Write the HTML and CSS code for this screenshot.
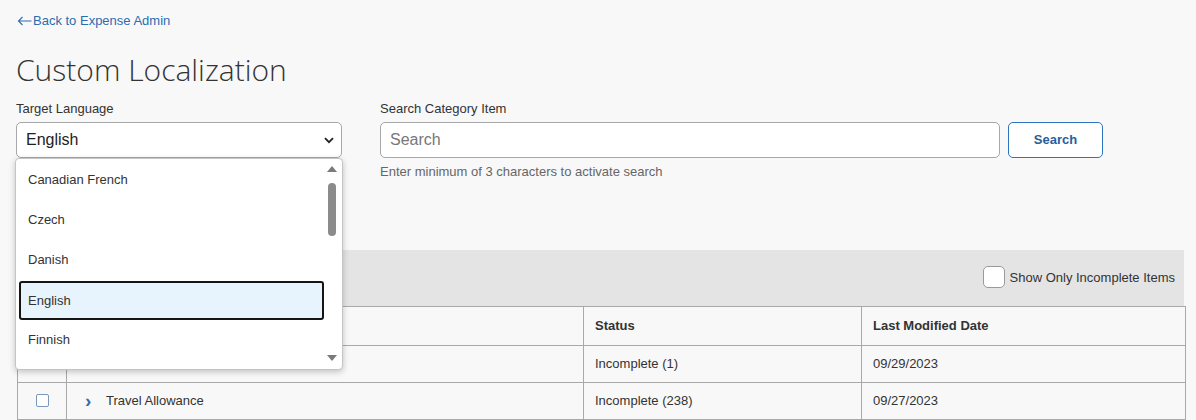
FILE: index.html
```html
<!DOCTYPE html>
<html lang="en">
<head>
<meta charset="utf-8">
<title>Custom Localization</title>
<link rel="stylesheet" href="styles.css">
</head>
<body>
<div class="page">
  <a class="back" href="#"><svg class="back-arrow" width="15" height="10" viewBox="0 0 15 10"><path d="M14.5 5H1.5M5.5 1L1.5 5l4 4" fill="none" stroke="currentColor" stroke-width="1.1"/></svg>Back to Expense Admin</a>
  <h1 class="title">Custom Localization</h1>

  <div class="form-row">
    <div class="field lang-field">
      <div class="label">Target Language</div>
      <div class="select">
        <span>English</span>
        <svg class="chev" width="10" height="7" viewBox="0 0 10 7"><path d="M1 1.2l4 4 4-4" fill="none" stroke="#222" stroke-width="1.8"/></svg>
      </div>
      <div class="dropdown">
        <ul class="options">
          <li class="opt">Canadian French</li>
          <li class="opt">Czech</li>
          <li class="opt">Danish</li>
          <li class="opt selected">English</li>
          <li class="opt">Finnish</li>
        </ul>
        <div class="scroll">
          <span class="tri up"></span>
          <span class="thumb"></span>
          <span class="track"></span>
          <span class="tri down"></span>
        </div>
      </div>
    </div>
    <div class="field search-field">
      <div class="label">Search Category Item</div>
      <div class="search-row">
        <div class="input">Search</div>
        <button class="btn">Search</button>
      </div>
      <div class="help">Enter minimum of 3 characters to activate search</div>
    </div>
  </div>

  <div class="band">
    <label class="only"><span class="cb-big"></span>Show Only Incomplete Items</label>
  </div>
  <table class="grid">
    <colgroup>
      <col class="c1"><col class="c2"><col class="c3"><col class="c4">
    </colgroup>
    <thead>
      <tr><th></th><th></th><th>Status</th><th>Last Modified Date</th></tr>
    </thead>
    <tbody>
      <tr>
        <td class="cbcell"><span class="cb"></span></td>
        <td><span class="exp">›</span>Car Rental</td>
        <td>Incomplete (1)</td>
        <td>09/29/2023</td>
      </tr>
      <tr>
        <td class="cbcell"><span class="cb"></span></td>
        <td><span class="exp">›</span>Travel Allowance</td>
        <td>Incomplete (238)</td>
        <td>09/27/2023</td>
      </tr>
    </tbody>
  </table>
</div>
</body>
</html>
```

FILE: styles.css
```css
* { box-sizing: border-box; }
html, body { margin: 0; padding: 0; }
body {
  background: #f8f8f8;
  font-family: "Liberation Sans", Arial, sans-serif;
  font-size: 13px;
  color: #333;
  height: 420px;
  overflow: hidden;
}
.page { padding: 13px 12px 0 16px; }

.back {
  display: inline-flex;
  align-items: center;
  height: 16px;
  line-height: 16px;
  color: #2d6cb0;
  text-decoration: none;
  font-size: 13px;
  margin-left: 1px;
}
.back-arrow { margin-right: 1px; }

.title {
  font-family: "Open Sans", sans-serif;
  font-weight: 300;
  font-size: 30px;
  line-height: 40px;
  margin: 21px 0 0 0;
  color: #333;
}

.form-row { display: flex; gap: 38px; margin-top: 11px; }
.field { display: flex; flex-direction: column; }
.lang-field { width: 326px; position: relative; }
.label { line-height: 16px; height: 16px; margin-bottom: 5px; }

.select {
  height: 36px;
  background: #fff;
  border: 1px solid #a8a8a8;
  border-radius: 5px;
  display: flex;
  align-items: center;
  justify-content: space-between;
  padding: 0 7px 0 9px;
  font-size: 16px;
  color: #222;
}
.chev { display: block; }

.dropdown {
  position: absolute;
  left: -1px;
  top: 57px;
  width: 328px;
  height: 212px;
  background: #fff;
  border: 1px solid #c4c4c4;
  border-radius: 4px;
  box-shadow: 0 2px 6px rgba(0,0,0,0.22);
  display: flex;
  z-index: 5;
}
.options {
  list-style: none;
  margin: 0;
  padding: 1px 0 0 3px;
  flex: 1;
}
.opt {
  height: 40px;
  line-height: 40px;
  padding-left: 9px;
  font-size: 13px;
  color: #333;
}
.opt.selected {
  background: #e8f4fd;
  border: 2px solid #151515;
  border-radius: 3px;
  line-height: 36px;
  padding-left: 7px;
  height: 39px;
  margin-top: 1px;
}
.scroll {
  width: 16px;
  display: flex;
  flex-direction: column;
  align-items: center;
  padding: 7px 0 8px 0;
  margin-right: 2px;
}
.tri { width: 0; height: 0; border-left: 5px solid transparent; border-right: 5px solid transparent; }
.tri.up { border-bottom: 6px solid #7a7a7a; }
.tri.down { border-top: 6px solid #7a7a7a; }
.thumb {
  width: 8px;
  height: 53px;
  border-radius: 4px;
  background: #8b8b8b;
  margin-top: 11px;
}
.track { flex: 1; }

.search-row { display: flex; gap: 8px; }
.input {
  width: 620px;
  height: 36px;
  background: #fff;
  border: 1px solid #a8a8a8;
  border-radius: 5px;
  padding-left: 9px;
  line-height: 34px;
  font-size: 16px;
  color: #777;
}
.btn {
  width: 95px;
  height: 36px;
  background: #fff;
  border: 1px solid #2c73c2;
  border-radius: 5px;
  font-family: "Liberation Sans", Arial, sans-serif;
  font-weight: bold;
  font-size: 13px;
  color: #2a5d99;
  padding: 0 0 2px 0;
}
.help { margin-top: 6px; line-height: 16px; font-size: 13px; color: #666; }

.band {
  margin-top: 70px;
  height: 56px;
  background: #e3e4e3;
  display: flex;
  align-items: center;
  justify-content: flex-end;
  padding-right: 9px;
  padding-bottom: 2px;
}
.only { display: flex; align-items: center; font-size: 13px; color: #333; }
.cb-big {
  width: 22px;
  height: 22px;
  background: #fff;
  border: 1px solid #9a9a9a;
  border-radius: 5px;
  margin-right: 5px;
}

.grid {
  width: 1168px;
  border-collapse: collapse;
  table-layout: fixed;
  margin-left: 1px;
}
.c1 { width: 49px; }
.c2 { width: 517px; }
.c3 { width: 278px; }
.c4 { width: 324px; }
.grid th, .grid td {
  border: 1px solid #a9a9a9;
  text-align: left;
  padding: 0 11px 1px 11px;
  font-size: 13px;
  color: #333;
}
.grid thead th { height: 39px; font-weight: bold; }
.grid tbody td { height: 37px; }
.grid .cbcell { text-align: center; padding: 0; }
.cb {
  display: inline-block;
  width: 13px;
  height: 13px;
  border: 1px solid #7a98bc;
  border-radius: 2px;
  background: #fff;
  vertical-align: middle;
  margin-top: -3px;
}
.exp {
  display: inline-block;
  color: #2d6cb0;
  font-weight: bold;
  font-size: 19px;
  width: 19px;
  margin-left: 7px;
  margin-right: 2px;
  vertical-align: -2px;
}
```
